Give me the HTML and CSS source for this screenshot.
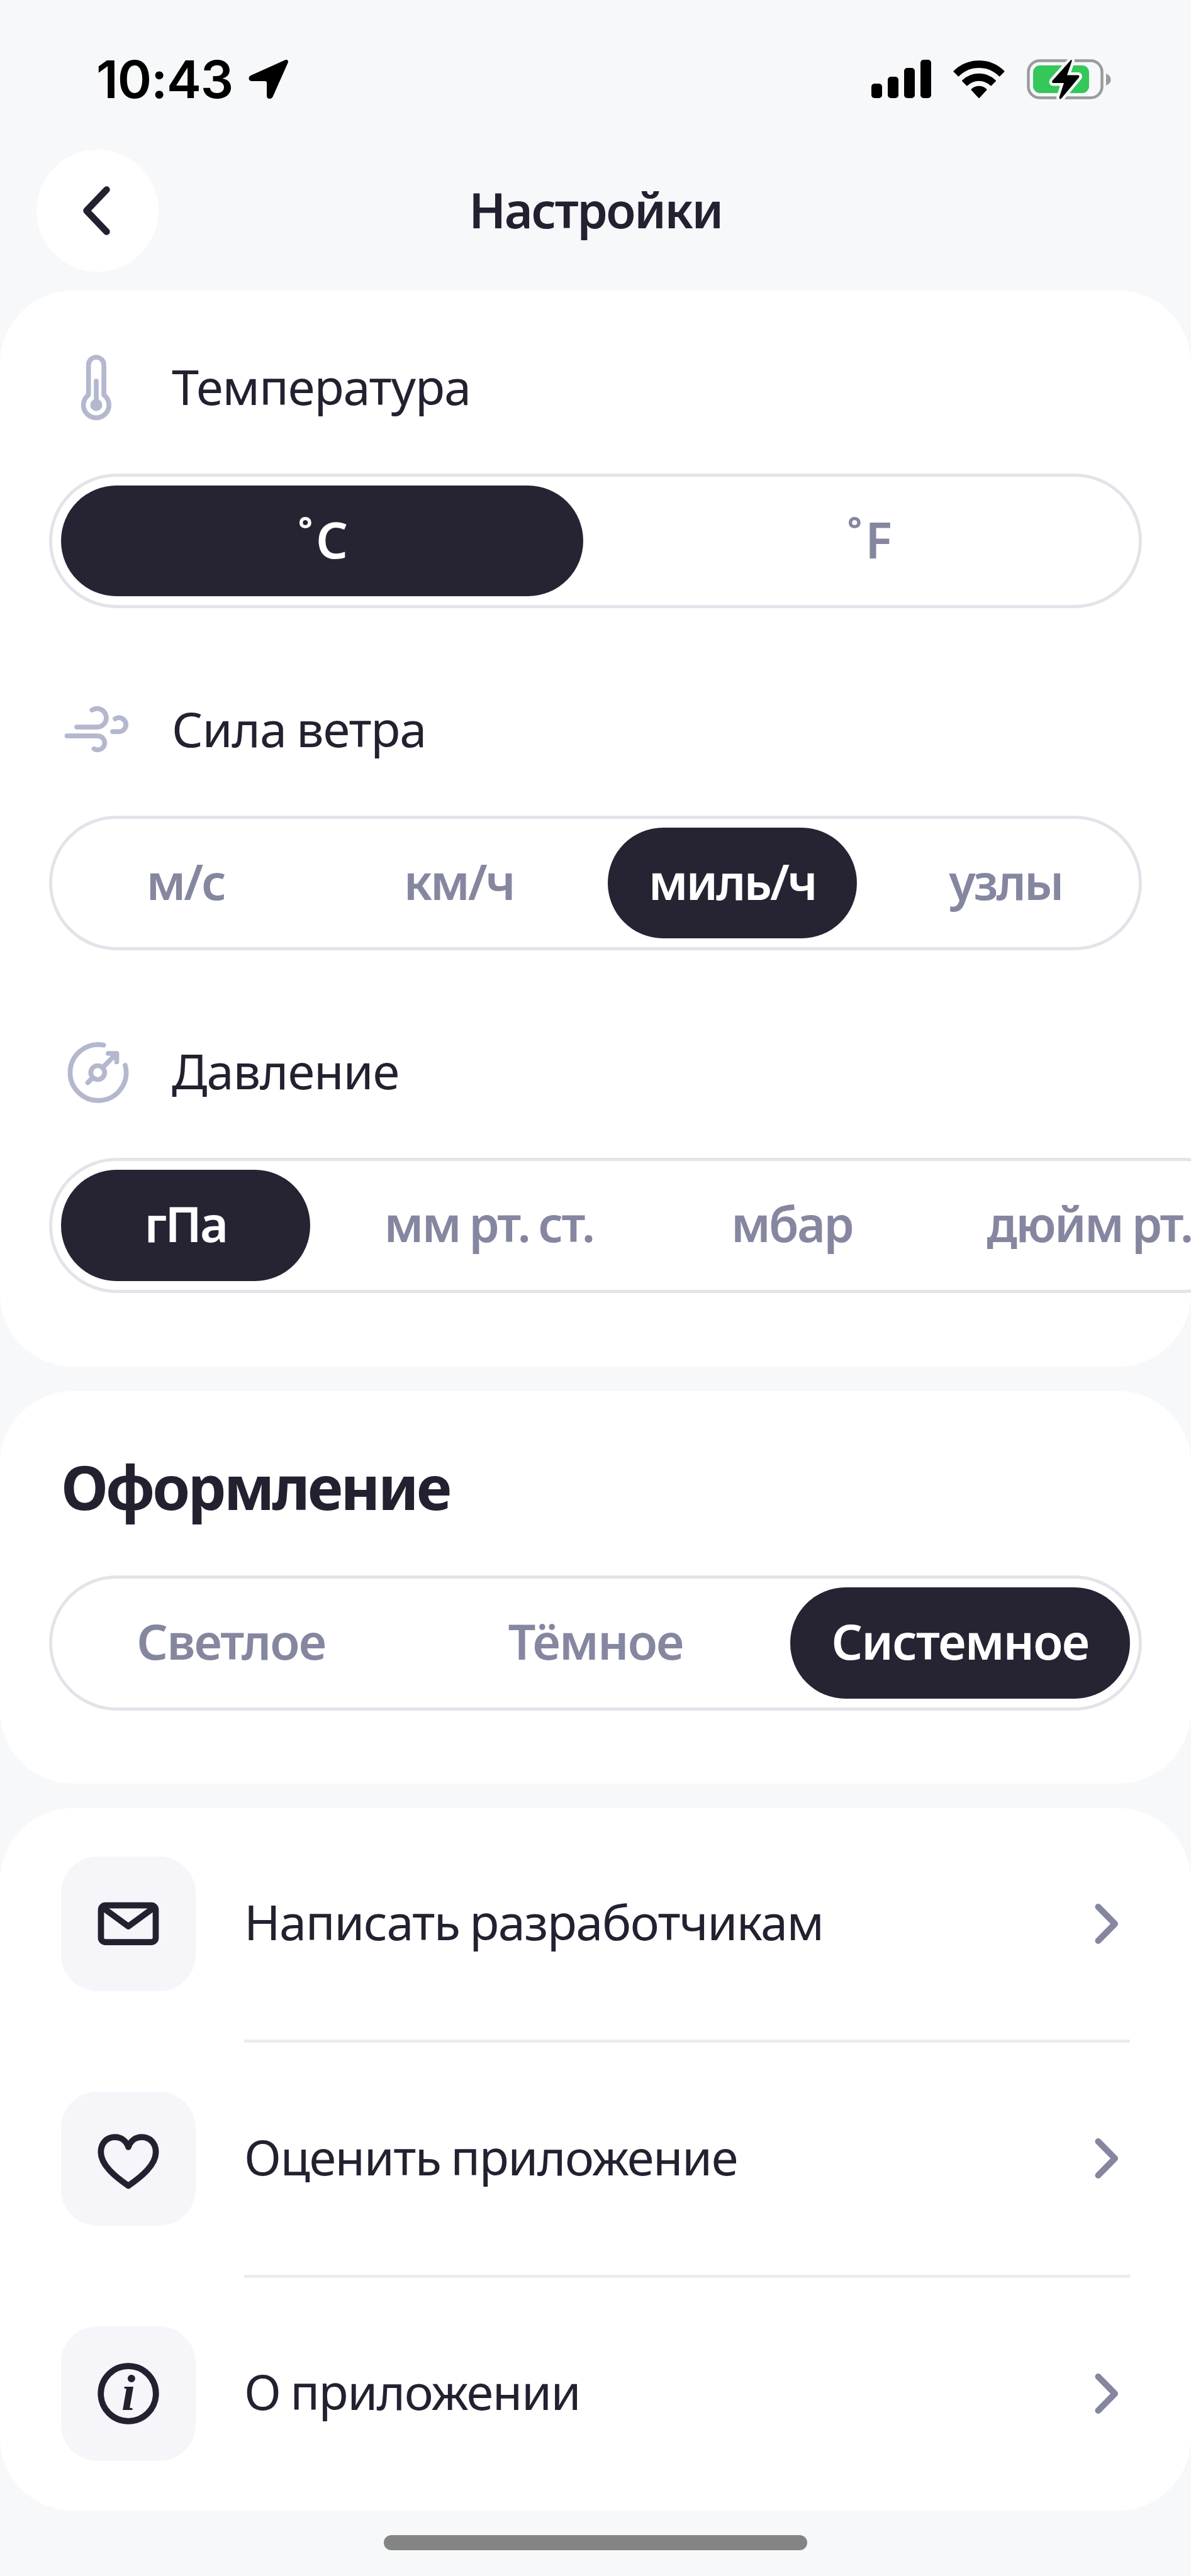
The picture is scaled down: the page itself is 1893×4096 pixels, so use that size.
FILE: index.html
```
<!DOCTYPE html>
<html lang="ru">
<head>
  <meta charset="UTF-8">
  <title>Настройки</title>
  <link rel="stylesheet" href="styles.css">
</head>
<body>
  <div class="status-bar">
    <div class="status-left">
      <span class="time">10:43</span>
      <svg class="location" viewBox="0 0 64 64"><path d="M58 1.500C61.500 0 64 2.500 62.500 6L38.500 60C36.500 64.500 29 64 29 58.500V37.500Q29 35 26.500 35H6C0 35-1.500 28.500 3.500 26Z"/></svg>
    </div>
    <div class="status-right">
      <svg class="signal" viewBox="0 0 95 62">
        <rect x="0" y="38" width="17" height="23" rx="5"/>
        <rect x="26" y="27" width="17" height="34" rx="5"/>
        <rect x="52" y="13" width="17" height="48" rx="5"/>
        <rect x="78" y="0" width="17" height="61" rx="5"/>
      </svg>
      <svg class="wifi" viewBox="0 0 82 62">
        <path d="M1.500 18.500A56 56 0 0 1 80.500 18.500L73.500 25.500A46 46 0 0 0 8.500 25.500Z"/>
        <path d="M15 33.500A37 37 0 0 1 67 33.500L60 40.500A27 27 0 0 0 22 40.500Z"/>
        <path d="M29.500 47.500A16.500 16.500 0 0 1 52.500 47.500L41 60Z"/>
      </svg>
      <svg class="battery" viewBox="0 0 134 68">
        <rect x="2.500" y="4.500" width="117" height="59" rx="18" fill="none" stroke="#9a9b9c" stroke-width="4.500"/>
        <path d="M126 25Q133.500 28 133.500 34.500Q133.500 41 126 44Z" fill="#9a9b9c"/>
        <rect x="10" y="12" width="89" height="44" rx="11" fill="#34c759"/>
        <path class="bolt" d="M70 3.500L40.500 36.500Q39 39.500 42 40H59L51.500 63Q52 67 55 64.500L83 31Q84.500 28 81.500 27.500H64L71.500 5.500Q72 2 70 3.500Z"/>
      </svg>
    </div>
  </div>

  <div class="header">
    <button class="back">
      <svg viewBox="0 0 48 84"><path d="M38.500 8.500L6.500 42L38.500 75.500"/></svg>
    </button>
    <h1>Настройки</h1>
  </div>

  <div class="card units">
    <div class="label">
      <svg viewBox="0 0 116 116">
        <path d="M43.700 69.800V22.200a12.200 12.200 0 0 1 24.400 0V69.800a20.300 20.300 0 1 1-24.400 0Z"/>
        <path d="M56 48V86"/>
        <circle class="dot" cx="56" cy="86" r="9.600"/>
      </svg>
      <span>Температура</span>
    </div>
    <div class="segments degrees">
      <button class="active">˚C</button>
      <button>˚F</button>
    </div>

    <div class="label">
      <svg viewBox="0 0 116 116">
        <path d="M25 54.100H57.200A14.700 14.700 0 1 0 49.300 27"/>
        <path d="M82 61.300H92.200A11.100 11.100 0 1 0 86 40.900"/>
        <path d="M9.500 68.100H58.300A11.100 11.100 0 1 1 52.500 88.700"/>
      </svg>
      <span>Сила ветра</span>
    </div>
    <div class="segments wind">
      <button>м/с</button>
      <button>км/ч</button>
      <button class="active">миль/ч</button>
      <button>узлы</button>
    </div>

    <div class="label">
      <svg viewBox="0 0 116 116">
        <path d="M67.500 15.700A44.500 44.500 0 1 0 102 48"/>
        <circle cx="58.300" cy="59.500" r="11"/>
        <path d="M50.500 67.500L42.500 75.500M66 51.500L88.500 29M75 29H88.500V42.500"/>
      </svg>
      <span>Давление</span>
    </div>
    <div class="segments scroll">
      <button class="active">гПа</button>
      <button>мм рт. ст.</button>
      <button>мбар</button>
      <button>дюйм рт.</button>
    </div>
  </div>

  <div class="card theme">
    <h2>Оформление</h2>
    <div class="segments">
      <button>Светлое</button>
      <button>Тёмное</button>
      <button class="active">Системное</button>
    </div>
  </div>

  <div class="card links">
    <a class="row">
      <span class="icon">
        <svg viewBox="0 0 116 116">
          <rect x="14.500" y="28.700" width="87" height="58.500" rx="7"/>
          <path d="M17 32L58 62L99 32"/>
        </svg>
      </span>
      <span class="text">Написать разработчикам</span>
      <svg class="chevron" viewBox="0 0 44 72"><path d="M8.500 9L35 36L8.500 63"/></svg>
    </a>
    <hr>
    <a class="row">
      <span class="icon">
        <svg viewBox="0 0 116 116">
          <path d="M58 101.500C37 87 14.300 68.500 14.300 48C14.300 33 24.500 24.200 36.500 24.200C47.500 24.200 55 31 58 40C61 31 68.500 24.200 79.500 24.200C91.500 24.200 101.700 33 101.700 48C101.700 68.500 79 87 58 101.500Z"/>
        </svg>
      </span>
      <span class="text">Оценить приложение</span>
      <svg class="chevron" viewBox="0 0 44 72"><path d="M8.500 9L35 36L8.500 63"/></svg>
    </a>
    <hr>
    <a class="row">
      <span class="icon">
        <svg viewBox="0 0 116 116">
          <circle cx="58" cy="58" r="43.800"/>
          <text x="58" y="84" text-anchor="middle">i</text>
        </svg>
      </span>
      <span class="text">О приложении</span>
      <svg class="chevron" viewBox="0 0 44 72"><path d="M8.500 9L35 36L8.500 63"/></svg>
    </a>
  </div>

  <div class="home-indicator"></div>
</body>
</html>
```
FILE: styles.css
```
* {
  box-sizing: border-box;
}

body {
  margin: 0;
  height: 4096px;
  overflow: hidden;
  background: #f6f8fa;
  color: #232130;
  font-family: "Noto Sans", sans-serif;
  font-size: 77.5px;
}

button {
  padding: 0;
  border: none;
  background: none;
  color: inherit;
  font: inherit;
}

svg {
  display: block;
  flex: none;
}

.status-bar {
  display: flex;
  justify-content: space-between;
  align-items: center;
  height: 238px;
  padding: 14px 127px 0 153px;
}

.status-left, .status-right {
  display: flex;
  align-items: center;
}

.time {
  font-family: Inter, sans-serif;
  font-size: 82.5px;
  font-weight: 600;
  letter-spacing: -1.2px;
  line-height: 1;
  color: #000;
}

.location {
  width: 64px;
  height: 64px;
  margin-left: 25px;
}

.signal {
  width: 95px;
  height: 62px;
  margin-right: 35px;
}

.wifi {
  width: 82px;
  height: 62px;
  margin-right: 35px;
}

.wifi path {
  stroke: #000;
  stroke-width: 2;
  stroke-linejoin: round;
}

.battery {
  width: 134px;
  height: 68px;
  overflow: visible;
}

.bolt {
  stroke: #f6f8fa;
  stroke-width: 9;
  paint-order: stroke;
}

.header {
  display: grid;
  grid-template-columns: 194px 1fr 194px;
  align-items: center;
  height: 194px;
  margin-bottom: 29.5px;
  padding: 0 58px;
}

.back {
  display: flex;
  justify-content: center;
  align-items: center;
  width: 194px;
  height: 194px;
  border-radius: 50%;
  background: #fff;
}

.back svg {
  width: 48px;
  height: 84px;
  fill: none;
  stroke: #232130;
  stroke-width: 10.5;
  stroke-linecap: round;
  stroke-linejoin: round;
}

h1 {
  margin: 0;
  padding-bottom: 5px;
  text-align: center;
  font-size: 77.5px;
  font-weight: 600;
  letter-spacing: -2.4px;
}

.card {
  margin-bottom: 39px;
  border-radius: 116px;
  background: #fff;
  overflow: hidden;
}

.units {
  height: 1711px;
  padding: 96px 78px 0;
}

.label {
  display: flex;
  align-items: center;
  gap: 60px;
  height: 116px;
  margin: 0 0 79px 19px;
  letter-spacing: -1.1px;
  word-spacing: -3px;
}

.label span {
  padding-bottom: 4px;
}

.label svg {
  width: 116px;
  height: 116px;
  fill: none;
  stroke: #b3b8cf;
  stroke-width: 7.7;
  stroke-linecap: round;
  stroke-linejoin: round;
}

.label .dot {
  fill: #b3b8cf;
  stroke: none;
}

.segments {
  display: grid;
  grid-auto-flow: column;
  grid-auto-columns: 1fr;
  gap: 39px;
  height: 214.5px;
  padding: 14px;
  border: 5px solid #e3e3ea;
  border-radius: 108px;
}

.segments + .label {
  margin-top: 134.8px;
}

.segments button {
  padding-bottom: 6px;
  border-radius: 88px;
  color: #8587a0;
  font-weight: 600;
  letter-spacing: -1.9px;
  word-spacing: -3px;
  white-space: nowrap;
}

.degrees button {
  font-size: 80px;
  letter-spacing: 4px;
  text-indent: 6px;
}

.wind button {
  letter-spacing: -3px;
}

.segments .active {
  background: #262433;
  color: #fff;
}

/* wider than the screen, cut off on the right */
.scroll {
  grid-template-columns: 396px 490px 395px 473px;
  width: 1910px;
}

.scroll button {
  letter-spacing: -2.7px;
}

.theme {
  height: 624px;
  padding: 94px 78px 0;
}

h2 {
  margin: 0 0 83.5px 19px;
  font-size: 96.5px;
  font-weight: 700;
  letter-spacing: -3.9px;
  line-height: 116px;
}

.links {
  height: 1117px;
  padding: 77.5px 97px 0;
}

.row {
  display: flex;
  align-items: center;
  height: 213.5px;
}

.icon {
  display: flex;
  justify-content: center;
  align-items: center;
  width: 213.5px;
  height: 213.5px;
  margin-right: 77.5px;
  border-radius: 58px;
  background: #f5f5fa;
}

.icon svg {
  width: 116px;
  height: 116px;
  fill: none;
  stroke: #232130;
  stroke-width: 9.7;
  stroke-linejoin: round;
}

.icon text {
  fill: #232130;
  stroke: none;
  font-family: "Liberation Serif", serif;
  font-size: 80px;
  font-style: italic;
  font-weight: 700;
}

.text {
  flex: 1;
  padding-bottom: 7px;
  letter-spacing: -1.5px;
  word-spacing: -3px;
}

.chevron {
  width: 44px;
  height: 72px;
  margin-right: 15px;
  fill: none;
  stroke: #8587a0;
  stroke-width: 10;
  stroke-linecap: round;
  stroke-linejoin: round;
}

hr {
  height: 5px;
  margin: 77.5px 0 77.5px 291px;
  border: none;
  background: #ebebf1;
}

.home-indicator {
  width: 673px;
  height: 24.5px;
  margin: 2px auto 0;
  border-radius: 13px;
  background: #848484;
}
```
